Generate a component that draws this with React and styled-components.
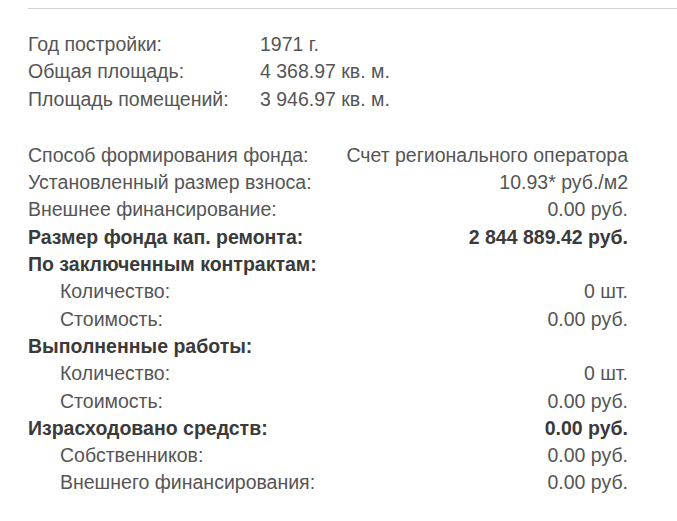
import styled, { createGlobalStyle } from 'styled-components';

const GlobalStyle = createGlobalStyle`
    body {
        margin: 0;
        background: #fff;
        font-family: "Liberation Sans", Arial, sans-serif;
    }
`;

const Page = styled.div`
    padding: 8px 0 0 28px;
`;

const Divider = styled.div`
    height: 1px;
    background: #d3d3d3;
`;

const Info = styled.div`
    width: 600px;
    padding-top: 22px;
    font-size: 19.5px;
    line-height: 27.3px;
    color: #555;
`;

const Params = styled.div`
    display: grid;
    grid-template-columns: 232px auto;
`;

const Finance = styled.div`
    display: grid;
    grid-template-columns: 1fr auto;
    margin-top: 29px;
`;

const Label = styled.div`
    padding-left: ${(p) => (p.$sub ? '32px' : '0')};
    font-weight: ${(p) => (p.$bold ? 700 : 400)};
    color: ${(p) => (p.$bold ? '#3a3a3a' : '#555')};
    white-space: nowrap;
`;

const Value = styled.div`
    text-align: ${(p) => (p.$left ? 'left' : 'right')};
    font-weight: ${(p) => (p.$bold ? 700 : 400)};
    color: ${(p) => (p.$bold ? '#3a3a3a' : '#555')};
    white-space: nowrap;
`;

const params = [
    ['Год постройки:', '1971 г.'],
    ['Общая площадь:', '4 368.97 кв. м.'],
    ['Площадь помещений:', '3 946.97 кв. м.'],
];

const finance = [
    { label: 'Способ формирования фонда:', value: 'Счет регионального оператора' },
    { label: 'Установленный размер взноса:', value: '10.93* руб./м2' },
    { label: 'Внешнее финансирование:', value: '0.00 руб.' },
    { label: 'Размер фонда кап. ремонта:', value: '2 844 889.42 руб.', bold: true },
    { label: 'По заключенным контрактам:', value: '', bold: true },
    { label: 'Количество:', value: '0 шт.', sub: true },
    { label: 'Стоимость:', value: '0.00 руб.', sub: true },
    { label: 'Выполненные работы:', value: '', bold: true },
    { label: 'Количество:', value: '0 шт.', sub: true },
    { label: 'Стоимость:', value: '0.00 руб.', sub: true },
    { label: 'Израсходовано средств:', value: '0.00 руб.', bold: true },
    { label: 'Собственников:', value: '0.00 руб.', sub: true },
    { label: 'Внешнего финансирования:', value: '0.00 руб.', sub: true },
];

export default function App() {
    return (
        <Page>
            <GlobalStyle />
            <Divider />
            <Info>
                <Params>
                    {params.map(([label, value]) => (
                        <>
                            <Label key={label}>{label}</Label>
                            <Value key={label + 'v'} $left>{value}</Value>
                        </>
                    ))}
                </Params>

                <Finance>
                    {finance.map((row, i) => (
                        <>
                            <Label key={'l' + i} $bold={row.bold} $sub={row.sub}>{row.label}</Label>
                            <Value key={'v' + i} $bold={row.bold}>{row.value}</Value>
                        </>
                    ))}
                </Finance>
            </Info>
        </Page>
    );
}
